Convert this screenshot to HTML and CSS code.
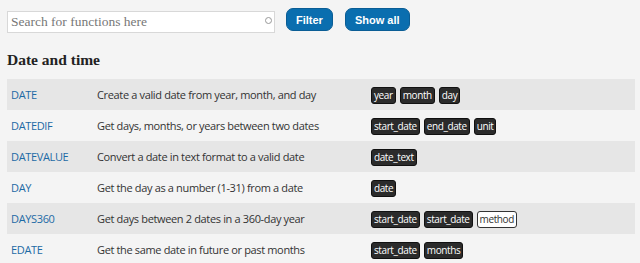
FILE: index.html
```html
<!DOCTYPE html>
<html>
<head>
    <title>Excel functions - Date and time</title>
    <link rel="stylesheet" href="styles.css">
</head>
<body>
    <div class="toolbar">
        <div class="search">
            <input type="text" placeholder="Search for functions here">
            <span class="clear"></span>
        </div>
        <button>Filter</button>
        <button>Show all</button>
    </div>

    <h2>Date and time</h2>

    <table class="functions">
        <tr>
            <td class="name"><a href="#">DATE</a></td>
            <td class="desc">Create a valid date from year, month, and day</td>
            <td class="args"><span class="arg">year</span><span class="arg">month</span><span class="arg">day</span></td>
        </tr>
        <tr>
            <td class="name"><a href="#">DATEDIF</a></td>
            <td class="desc">Get days, months, or years between two dates</td>
            <td class="args"><span class="arg">start_date</span><span class="arg">end_date</span><span class="arg">unit</span></td>
        </tr>
        <tr>
            <td class="name"><a href="#">DATEVALUE</a></td>
            <td class="desc">Convert a date in text format to a valid date</td>
            <td class="args"><span class="arg">date_text</span></td>
        </tr>
        <tr>
            <td class="name"><a href="#">DAY</a></td>
            <td class="desc">Get the day as a number (1-31) from a date</td>
            <td class="args"><span class="arg">date</span></td>
        </tr>
        <tr>
            <td class="name"><a href="#">DAYS360</a></td>
            <td class="desc">Get days between 2 dates in a 360-day year</td>
            <td class="args"><span class="arg">start_date</span><span class="arg">start_date</span><span class="arg optional">method</span></td>
        </tr>
        <tr>
            <td class="name"><a href="#">EDATE</a></td>
            <td class="desc">Get the same date in future or past months</td>
            <td class="args"><span class="arg">start_date</span><span class="arg">months</span></td>
        </tr>
    </table>
</body>
</html>
```

FILE: styles.css
```css
body { margin: 0; padding: 8px 5px 0 7px; background: #f4f4f4; font-family: "Open Sans", sans-serif; color: #333; }
.toolbar { display: flex; align-items: center; height: 23px; }
.search { position: relative; width: 268px; height: 22px; margin-right: 11px; }
.search input { width: 100%; height: 100%; box-sizing: border-box; border: 1px solid #d8d8d8; background: #fff; padding: 0 4px 1px 3px; font-family: "Liberation Serif", serif; font-size: 13.5px; color: #333; outline: none; }
.search input::placeholder { color: #777; }
.clear { position: absolute; right: 3px; top: 8px; width: 5px; height: 5px; border: 1px solid #999; border-radius: 50%; }
button { height: 23px; padding: 0 9px; margin-right: 12px; background: #0a6eaf; color: #fff; border: 1px solid #0a5d95; border-radius: 7px; font-family: "Liberation Sans", Arial, sans-serif; font-weight: bold; font-size: 11px; cursor: pointer; }
h2 { margin: 19px 0 9px 0; font-family: "Liberation Serif", serif; font-weight: bold; font-size: 15.5px; color: #222; line-height: 20px; }
.functions { width: 628px; border-collapse: collapse; font-size: 11px; letter-spacing: -0.35px; }
.functions tr { height: 31px; }
.functions tr:nth-child(odd) { background: #e6e6e6; }
.functions td { padding: 0 4px; vertical-align: middle; }
.name { width: 78px; }
.name a { color: #1d6aa5; text-decoration: none; }
.desc { width: 266px; color: #333; }
.args { line-height: 17px; }
.arg { display: inline-block; height: 17px; padding: 0 2px; margin-right: 4px; background: #2b2b2b; color: #fff; border: 1px solid #111; border-radius: 3px; font-size: 10px; letter-spacing: -0.4px; box-sizing: border-box; line-height: 15px; }
.arg.optional { background: #fff; color: #333; border-color: #333; }
```
